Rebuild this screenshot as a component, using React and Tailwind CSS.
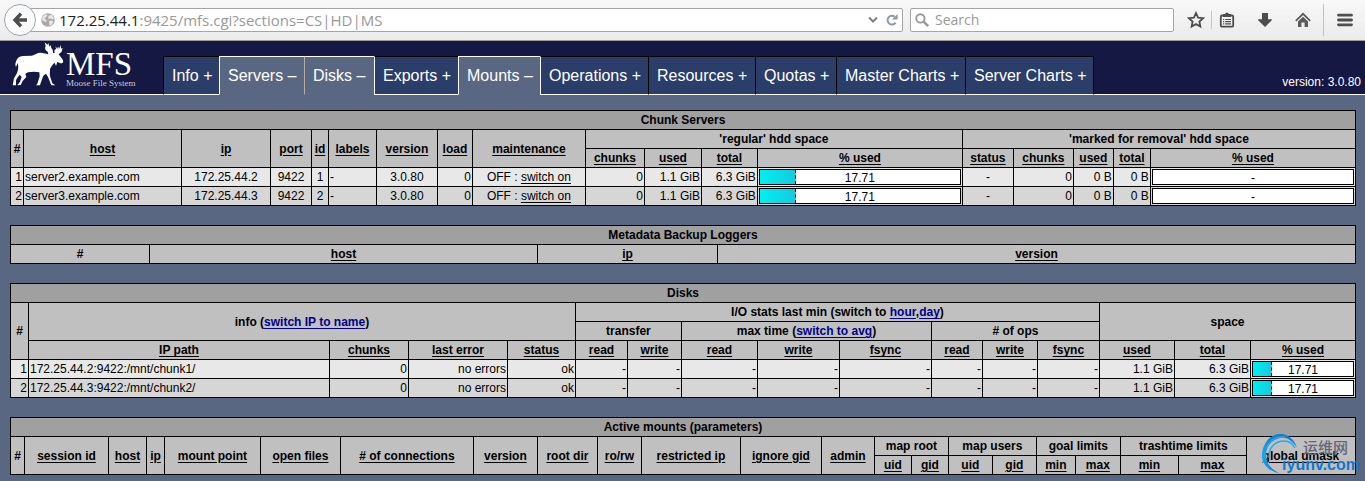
import React, { useState } from 'react';
import { clsx } from 'clsx';

const tabs = [
  { label: 'Info', width: 'w-[56px]' },
  { label: 'Servers', width: 'w-[85px]', open: true },
  { label: 'Disks', width: 'w-[70px]', open: true },
  { label: 'Exports', width: 'w-[84px]' },
  { label: 'Mounts', width: 'w-[82px]', open: true },
  { label: 'Operations', width: 'w-[108px]' },
  { label: 'Resources', width: 'w-[107px]' },
  { label: 'Quotas', width: 'w-[81px]' },
  { label: 'Master Charts', width: 'w-[129px]' },
  { label: 'Server Charts', width: 'w-[129px]' },
];

// relative column widths, turned into percentages by DataTable
const serverColumns = [13, 158, 89, 41, 17, 48, 61, 35, 113, 59, 57, 56, 205, 51, 60, 40, 37, 205];
const loggerColumns = [139, 388, 180, 638];
const diskColumns = [18, 301, 79, 99, 68, 52, 54, 76, 82, 92, 51, 55, 62, 75, 76, 105];
const mountColumns = [14, 84, 38, 18, 96, 80, 133, 64, 60, 44, 99, 81, 53, 37, 37, 44, 44, 39, 45, 58, 68, 109];

const servers = [
  { id: 1, host: 'server2.example.com', ip: '172.25.44.2' },
  { id: 2, host: 'server3.example.com', ip: '172.25.44.3' },
];

const disks = [
  { id: 1, path: '172.25.44.2:9422:/mnt/chunk1/' },
  { id: 2, path: '172.25.44.3:9422:/mnt/chunk2/' },
];

function BackIcon() {
  return (
    <svg viewBox="0 0 16 16" className="h-4 w-4" fill="none" stroke="#4d4d4d" strokeWidth="3.4">
      <path d="M9 1.6 3 8l6 6.4M3.4 8H15" />
    </svg>
  );
}

function GlobeIcon() {
  return (
    <svg viewBox="0 0 14 14" className="h-3.5 w-3.5 shrink-0">
      <circle cx="7" cy="7" r="6.8" fill="#a9a9a9" />
      <path d="M1.5 4 4.5 1.2 6.5 2 5 4.2 3.2 5.4 5.5 7 5 9.5 3 8 1 7zM8 2.6l3-.6 2 3.4-1.6 1-1.4-1.2L8.2 6 7 4.4zM8 8l3-.4 1.4 1.2L10 12.4 8.4 12z" fill="#e9e9e9" />
    </svg>
  );
}

function StarIcon() {
  return (
    <svg viewBox="0 0 18 18" className="h-[18px] w-[18px]" fill="none" stroke="#4d4d4d" strokeWidth="1.8">
      <path d="m9 2 2.1 4.6 5 .6-3.7 3.4 1 5L9 13.1l-4.4 2.5 1-5L1.900 7.200l5-.6z" />
    </svg>
  );
}

function ClipboardIcon() {
  return (
    <svg viewBox="0 0 16 16" className="h-4 w-4">
      <path d="M3 3.500h10a1.200 1.200 0 0 1 1.200 1.200v8.800a1.200 1.200 0 0 1-1.200 1.200H3a1.200 1.200 0 0 1-1.200-1.200V4.700A1.200 1.200 0 0 1 3 3.500z" fill="none" stroke="#4d4d4d" strokeWidth="1.800" />
      <path d="M4 5V2h2.100a1.950 1.950 0 0 1 3.800 0H12v3z" fill="#4d4d4d" />
      <path d="M4 7.500h1.200M6.200 7.500H12M4 9.700h1.200M6.200 9.700H12M4 11.900h1.200M6.200 11.900H12" stroke="#4d4d4d" strokeWidth="1.200" />
    </svg>
  );
}

function DownloadIcon() {
  return (
    <svg viewBox="0 0 16 16" className="h-4 w-4">
      <path d="M5 1h6v6.200h3.800v1L8 15 1.200 8.200v-1H5z" fill="#4d4d4d" />
    </svg>
  );
}

function HomeIcon() {
  return (
    <svg viewBox="0 0 16 16" className="h-4 w-4">
      <path d="M.8 8.800 8 1.800l7.200 7" fill="none" stroke="#5a5a5a" strokeWidth="1.700" />
      <path d="M8 4.800l5 4.800V15H9.600v-4.500H6.400V15H3V9.600z" fill="#5a5a5a" />
    </svg>
  );
}

function MenuIcon() {
  return (
    <svg viewBox="0 0 16 14" className="h-3.5 w-4">
      <path d="M1.500 2.200h13M1.500 7h13M1.500 11.800h13" stroke="#4d4d4d" strokeWidth="2.800" strokeLinecap="round" />
    </svg>
  );
}

function MooseIcon() {
  return (
    <svg viewBox="36 10 156 135" className="h-[45px] w-[52px] shrink-0">
      <path
        fill="#fff"
        d="M48 72C52 60 58 56 68 55L95 54C105 51 112 44 124 45C132 47 138 47 145 50L143 42C136 38 133 32 137 24L134 14L142 21L145 16L148 27L152 22L154 31L158 36L159 46L164 46C162 38 164 34 169 35L166 26L172 33L174 26L177 34L182 22L183 33L188 30L185 42L176 50C180 56 186 62 189 68C191 74 188 78 182 77L172 73L168 85L164 75C158 80 154 86 150 94C150 104 148 112 152 122L157 137L166 143L154 143L144 118L138 108L130 114L122 136L120 143L108 143L112 138L119 116L118 104C108 102 96 102 84 104L76 108L79 118L68 130L62 142L52 143L60 132L65 118L59 111C54 118 48 124 48 130L48 143L38 143L42 122L50 108C54 100 56 92 54 80L53 76L48 88C45 82 46 76 48 72Z"
      />
    </svg>
  );
}

function Toolbar() {
  const [url, setUrl] = useState('172.25.44.1:9425/mfs.cgi?sections=CS|HD|MS');
  const [search, setSearch] = useState('');
  const host = url.split(':')[0];

  return (
    <div className="flex h-[41px] items-center border-b border-[#9b9b9b] bg-linear-to-b from-[#f8f8f8] to-[#ebebeb] pl-1 font-['Open_Sans',sans-serif] text-sm">
      <button aria-label="Back" className="z-10 flex h-8 w-8 shrink-0 items-center justify-center rounded-full border border-[#9aa5b1] bg-[#fafafa]">
        <BackIcon />
      </button>
      <div className="-ml-2 flex h-6 min-w-0 flex-1 items-center rounded-r-xs border border-[#a5a5a5] bg-white pr-1 pl-3">
        <GlobeIcon />
        <div className="ml-1 grid min-w-0 flex-1 items-center text-[15px]">
          <div aria-hidden="true" className="col-start-1 row-start-1 leading-5 whitespace-pre text-[#999]">
            <span className="text-[#222]">{host}</span>{url.slice(host.length)}
          </div>
          <input
            aria-label="Address"
            className="col-start-1 row-start-1 w-full bg-transparent leading-5 text-transparent caret-black outline-none"
            value={url}
            onChange={(e) => setUrl(e.target.value)}
          />
        </div>
        <button aria-label="History" className="mr-2">
          <svg viewBox="0 0 10 8" className="h-2 w-2.5" fill="none" stroke="#808080" strokeWidth="2">
            <path d="m1 1.5 4 4 4-4" />
          </svg>
        </button>
        <button aria-label="Reload">
          <svg viewBox="0 0 12 12" className="h-3 w-3" fill="none" stroke="#8b9aa8" strokeWidth="2">
            <path d="M9.6 8.6A4.4 4.4 0 1 1 8.6 2.6" />
            <path d="M11.6 0v5.6H6z" fill="#8b9aa8" stroke="none" />
          </svg>
        </button>
      </div>
      <label className="ml-[7px] flex h-6 w-[264px] items-center gap-1.5 rounded-xs border border-[#a5a5a5] bg-white px-1">
        <svg viewBox="0 0 14 14" className="h-3.5 w-3.5 shrink-0" fill="none" stroke="#989898">
          <circle cx="5.4" cy="5.4" r="4.2" strokeWidth="1.9" />
          <path d="m8.6 8.6 4.6 4.6" strokeWidth="2.4" />
        </svg>
        <input
          aria-label="Search"
          placeholder="Search"
          className="w-full leading-5 outline-none placeholder:text-[#999]"
          value={search}
          onChange={(e) => setSearch(e.target.value)}
        />
      </label>
      <div className="flex h-full w-[191px] items-center pr-3 pl-[13px]">
        <button aria-label="Bookmark"><StarIcon /></button>
        <span className="mr-[7px] ml-1.5 h-[18px] w-px bg-[#c4c4c4]" />
        <button aria-label="Bookmarks list"><ClipboardIcon /></button>
        <button aria-label="Downloads" className="ml-[22px]"><DownloadIcon /></button>
        <button aria-label="Home" className="ml-[22px]"><HomeIcon /></button>
        <span className="mr-[13px] ml-3 h-8 w-px bg-[#b9c2cc]" />
        <button aria-label="Menu"><MenuIcon /></button>
      </div>
    </div>
  );
}

function Header() {
  return (
    <header className="flex h-[54px] items-end bg-[#151843] text-white">
      <div className="flex h-full w-[163px] shrink-0 items-start gap-0.5 border-b border-white pl-3">
        <MooseIcon />
        <div className="pt-2 font-['Liberation_Serif',serif]">
          <div className="text-[33px] leading-[30px]">MFS</div>
          <div className="text-[9px] leading-2 whitespace-nowrap text-[#c8cad8]">Moose File System</div>
        </div>
      </div>
      <nav className="flex text-base">
        {tabs.map((tab, i) => {
          const afterOpen = i > 0 && tabs[i - 1].open;
          return (
            <a
              key={tab.label}
              href="#"
              className={clsx(
                'h-[39px] border-t border-b border-l pl-2 leading-[38px] whitespace-nowrap',
                tab.width,
                tab.open ? 'border-t-white border-b-[#5a6782] bg-[#5a6782]' : 'border-t-black border-b-white bg-[#2b3d69]',
                tab.open && afterOpen && 'border-l-[#b5aca0]',
                tab.open !== afterOpen && (tab.open || afterOpen) && 'border-l-white',
                !tab.open && !afterOpen && 'border-l-black',
                i === tabs.length - 1 && 'border-r border-r-black'
              )}
            >
              {tab.label} {tab.open ? '–' : '+'}
            </a>
          );
        })}
      </nav>
      <div className="flex h-full flex-1 items-end justify-end border-b border-white pr-1 pb-1 text-xs whitespace-nowrap">version: 3.0.80</div>
    </header>
  );
}

function DataTable({ title, columns, children }) {
  const total = columns.reduce((sum, width) => sum + width, 0);
  return (
    <table className="w-full table-fixed border-separate border-spacing-0 border-t border-l border-black text-xs whitespace-nowrap">
      <colgroup>
        {columns.map((width, i) => (
          <col key={i} style={{ width: `${(width / total) * 100}%` }} />
        ))}
      </colgroup>
      <thead>
        <tr>
          <th colSpan={columns.length} className="h-[19px] border-r border-b border-black bg-[#a0a0a0] p-0">{title}</th>
        </tr>
      </thead>
      {children}
    </table>
  );
}

function Th({ sort, children, ...rest }) {
  return (
    <th className="h-[19px] border-r border-b border-black bg-[#c0c0c0] p-0" {...rest}>
      {sort ? <a href="#" className="underline underline-offset-2">{children}</a> : children}
    </th>
  );
}

function Row({ children }) {
  return <tr className="bg-[#e8e8e8] even:bg-[#d6d6d6]">{children}</tr>;
}

function Td({ align = 'text-right', children }) {
  return <td className={clsx('h-[19px] border-r border-b border-black p-px leading-4', align)}>{children}</td>;
}

function UsageBar({ percent }) {
  return (
    <div className="grid h-4 border border-black bg-white text-center">
      {percent && (
        <div
          className="col-start-1 row-start-1 box-content h-3.5 border-r border-dashed border-black bg-linear-to-r from-[#00f0f0] to-[#12cbe0]"
          style={{ width: `${percent}%` }}
        />
      )}
      <span className="col-start-1 row-start-1 leading-4">{percent ? percent.toFixed(2) : '-'}</span>
    </div>
  );
}

function BlueLink({ children }) {
  return <a href="#" className="text-[#00008b] underline underline-offset-2">{children}</a>;
}

function ChunkServers() {
  return (
    <DataTable title="Chunk Servers" columns={serverColumns}>
      <tbody>
        <tr>
          <Th rowSpan={2}>#</Th>
          {['host', 'ip', 'port', 'id', 'labels', 'version', 'load', 'maintenance'].map((name) => (
            <Th key={name} sort rowSpan={2}>{name}</Th>
          ))}
          <Th colSpan={4}>'regular' hdd space</Th>
          <Th colSpan={5}>'marked for removal' hdd space</Th>
        </tr>
        <tr>
          {['chunks', 'used', 'total', '% used', 'status', 'chunks', 'used', 'total', '% used'].map((name, i) => (
            <Th key={i} sort>{name}</Th>
          ))}
        </tr>
      </tbody>
      <tbody>
        {servers.map((server) => (
          <Row key={server.id}>
            <Td>{server.id}</Td>
            <Td align="text-left">{server.host}</Td>
            <Td align="text-center">{server.ip}</Td>
            <Td align="text-center">9422</Td>
            <Td align="text-center">{server.id}</Td>
            <Td align="text-left">-</Td>
            <Td align="text-center">3.0.80</Td>
            <Td>0</Td>
            <Td align="text-center">OFF : <a href="#" className="underline underline-offset-2">switch on</a></Td>
            <Td>0</Td>
            <Td>1.1 GiB</Td>
            <Td>6.3 GiB</Td>
            <Td><UsageBar percent={17.71} /></Td>
            <Td align="text-center">-</Td>
            <Td>0</Td>
            <Td>0 B</Td>
            <Td>0 B</Td>
            <Td><UsageBar /></Td>
          </Row>
        ))}
      </tbody>
    </DataTable>
  );
}

function BackupLoggers() {
  return (
    <DataTable title="Metadata Backup Loggers" columns={loggerColumns}>
      <tbody>
        <tr>
          <Th>#</Th>
          <Th sort>host</Th>
          <Th sort>ip</Th>
          <Th sort>version</Th>
        </tr>
      </tbody>
    </DataTable>
  );
}

function Disks() {
  return (
    <DataTable title="Disks" columns={diskColumns}>
      <tbody>
        <tr>
          <Th rowSpan={3}>#</Th>
          <Th rowSpan={2} colSpan={4}>info (<BlueLink>switch IP to name</BlueLink>)</Th>
          <Th colSpan={8}>I/O stats last min (switch to <BlueLink>hour</BlueLink>,<BlueLink>day</BlueLink>)</Th>
          <Th rowSpan={2} colSpan={3}>space</Th>
        </tr>
        <tr>
          <Th colSpan={2}>transfer</Th>
          <Th colSpan={3}>max time (<BlueLink>switch to avg</BlueLink>)</Th>
          <Th colSpan={3}># of ops</Th>
        </tr>
        <tr>
          {['IP path', 'chunks', 'last error', 'status', 'read', 'write', 'read', 'write', 'fsync', 'read', 'write', 'fsync', 'used', 'total', '% used'].map((name, i) => (
            <Th key={i} sort>{name}</Th>
          ))}
        </tr>
      </tbody>
      <tbody>
        {disks.map((disk) => (
          <Row key={disk.id}>
            <Td>{disk.id}</Td>
            <Td align="text-left">{disk.path}</Td>
            <Td>0</Td>
            <Td>no errors</Td>
            <Td>ok</Td>
            {Array.from({ length: 8 }, (_, i) => <Td key={i}>-</Td>)}
            <Td>1.1 GiB</Td>
            <Td>6.3 GiB</Td>
            <Td><UsageBar percent={17.71} /></Td>
          </Row>
        ))}
      </tbody>
    </DataTable>
  );
}

function ActiveMounts() {
  return (
    <DataTable title="Active mounts (parameters)" columns={mountColumns}>
      <tbody>
        <tr>
          <Th rowSpan={2}>#</Th>
          {['session id', 'host', 'ip', 'mount point', 'open files', '# of connections', 'version', 'root dir', 'ro/rw', 'restricted ip', 'ignore gid', 'admin'].map((name) => (
            <Th key={name} sort rowSpan={2}>{name}</Th>
          ))}
          <Th colSpan={2}>map root</Th>
          <Th colSpan={2}>map users</Th>
          <Th colSpan={2}>goal limits</Th>
          <Th colSpan={2}>trashtime limits</Th>
          <Th sort rowSpan={2}>global umask</Th>
        </tr>
        <tr>
          {['uid', 'gid', 'uid', 'gid', 'min', 'max', 'min', 'max'].map((name, i) => (
            <Th key={i} sort>{name}</Th>
          ))}
        </tr>
      </tbody>
    </DataTable>
  );
}

function Watermark() {
  return (
    <div className="pointer-events-none absolute -right-1 bottom-0 h-[42px] w-[100px]">
      <svg viewBox="0 0 100 42" className="absolute inset-0 h-full w-full">
        <defs>
          <linearGradient id="swoosh" x1="0" y1="0" x2="0" y2="1">
            <stop offset="0" stopColor="#1478c8" />
            <stop offset="0.5" stopColor="#19a8ea" />
            <stop offset="1" stopColor="#1583d0" />
          </linearGradient>
        </defs>
        <path d="M21 41C8 38 1 31 2 20C4 8 12 0 22 1C29 2 35 7 37 15C32 7 26 4 20 5C11 7 6 14 6 22C6 31 12 37 21 41Z" fill="url(#swoosh)" />
        <path d="M9 25C8 15 15 8 24 8C29 8 33 11 35 15M6 15C10 7 17 3 25 4" fill="none" stroke="#2aa9e6" strokeWidth="1.3" />
      </svg>
      <span className="absolute top-1.5 right-3 font-['Noto_Sans_CJK_SC',sans-serif] text-[15px] leading-4 font-medium text-[#66667a]">运维网</span>
      <span className="absolute right-0 bottom-0 text-base leading-5 font-bold text-[#1477cc]">iyunv.com</span>
    </div>
  );
}

export default function App() {
  return (
    <div className="min-h-screen bg-[#5a6782] font-['Liberation_Sans',Arial,sans-serif] text-black">
      <Toolbar />
      <Header />
      <main className="flex flex-col gap-[19px] pt-[15px] pr-[9px] pb-1.5 pl-2.5">
        <ChunkServers />
        <BackupLoggers />
        <Disks />
        <div className="relative">
          <ActiveMounts />
          <Watermark />
        </div>
      </main>
    </div>
  );
}
